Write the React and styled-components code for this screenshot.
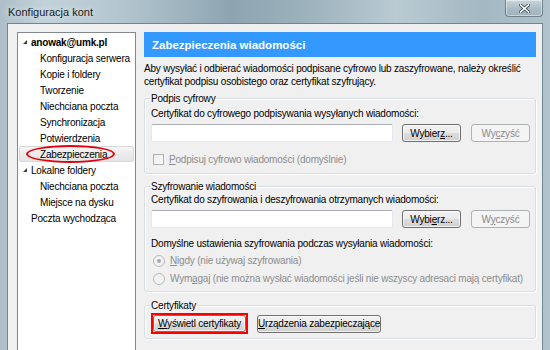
import React from "react";
import styled, { createGlobalStyle } from "styled-components";

const GlobalStyle = createGlobalStyle`
  html, body {
    margin: 0;
    padding: 0;
  }
  body {
    width: 550px;
    height: 350px;
    overflow: hidden;
    font-family: "Liberation Sans", Arial, sans-serif;
    font-size: 10px;
    letter-spacing: -0.2px;
    color: #000;
  }
`;

const Window = styled.div`
  width: 550px;
  height: 350px;
  overflow: hidden;
  display: flex;
  flex-direction: column;
  background: linear-gradient(
    90deg,
    #aebfc9 0%,
    #c2d2da 8%,
    #b3c6d0 22%,
    #8ea5b1 42%,
    #9bb1bc 55%,
    #b9cad2 72%,
    #a3b8c3 88%,
    #b1c3cc 100%
  );
`;

const TitleBar = styled.div`
  height: 23px;
  flex: none;
  display: flex;
  align-items: flex-start;
  justify-content: space-between;
  padding: 0 7px 0 8px;
`;

const Title = styled.span`
  margin-top: 6px;
  font-size: 11px;
  letter-spacing: 0;
  color: #1a1a1a;
  text-shadow: 0 0 6px rgba(255, 255, 255, 0.9);
`;

const CloseButton = styled.div`
  width: 36px;
  height: 16px;
  display: flex;
  align-items: center;
  justify-content: center;
  border: 1px solid #6e8290;
  border-top: none;
  border-radius: 0 0 4px 4px;
  background: linear-gradient(#c9d6dd, #a9bbc4 55%, #9fb2bc);
  box-shadow: inset 0 0 0 1px rgba(255, 255, 255, 0.45);
`;

const Body = styled.div`
  flex: 1;
  margin: 0 7px -20px 7px;
  border: 1px solid #6f8592;
  background: #f0f0f0;
  display: flex;
  gap: 8px;
  padding: 8px 10px 0 9px;
`;

const Tree = styled.div`
  width: 117px;
  flex: none;
  border: 1px solid #828790;
  background: #fff;
  padding-top: 1px;
`;

const TreeRow = styled.div`
  position: relative;
  height: 16px;
  display: flex;
  align-items: center;
  padding-left: ${(p) => p.$indent}px;
  margin: 0 1px;
  font-weight: ${(p) => (p.$bold ? "bold" : "normal")};
  white-space: nowrap;
  border: 1px solid ${(p) => (p.$selected ? "#d9d9d9" : "transparent")};
  border-radius: 2px;
  background: ${(p) =>
    p.$selected ? "linear-gradient(#f4f4f4, #e4e4e4)" : "transparent"};
  box-sizing: border-box;
`;

const Expander = styled.span`
  width: 0;
  height: 0;
  margin-right: 4px;
  border-left: 4px solid transparent;
  border-bottom: 4px solid #404040;
`;

const RedEllipse = styled.span`
  position: absolute;
  left: 6px;
  top: -2px;
  width: 85px;
  height: 14px;
  border: 2px solid #e3000e;
  border-radius: 50%;
`;

const Panel = styled.div`
  flex: 1;
  display: flex;
  flex-direction: column;
`;

const Header = styled.div`
  height: 25px;
  flex: none;
  display: flex;
  align-items: center;
  padding-left: 8px;
  background: #3399ff;
  color: #fff;
  font-weight: bold;
  font-size: 11.5px;
  letter-spacing: 0;
`;

const Description = styled.p`
  margin: 5px 0 0;
  line-height: 13px;
  white-space: nowrap;
`;

const Group = styled.fieldset`
  margin: ${(p) => p.$gap}px 0 0;
  padding: 0 5px ${(p) => p.$bottom}px 6px;
  border: 1px solid #d5dfe5;
  border-radius: 3px;
  box-shadow: inset 1px 1px 0 #fff, 1px 1px 0 #fff;
`;

const Legend = styled.legend`
  padding: 0 1px;
  margin-left: -1px;
  line-height: 13px;
`;

const Line = styled.div`
  line-height: 13px;
  margin-top: ${(p) => p.$top || 0}px;
  white-space: nowrap;
`;

const FieldRow = styled.div`
  display: flex;
  align-items: center;
  margin-top: ${(p) => p.$top}px;
`;

const TextInput = styled.div`
  width: 240px;
  height: 16px;
  background: #fff;
  border: 1px solid #e3e9ef;
  border-top-color: #abadb3;
  border-radius: 2px;
`;

const Button = styled.button`
  width: ${(p) => p.$w}px;
  height: ${(p) => p.$h || 18}px;
  margin-left: ${(p) => p.$left || 0}px;
  padding: 0;
  font-family: inherit;
  font-size: 10px;
  letter-spacing: -0.2px;
  white-space: nowrap;
  color: #000;
  border: 1px solid #707070;
  border-radius: 3px;
  background: linear-gradient(#f2f2f2 0%, #ebebeb 48%, #dddddd 52%, #cfcfcf 100%);
  box-shadow: inset 0 0 0 1px rgba(255, 255, 255, 0.7);

  &:disabled {
    color: #8a8a8a;
    border-color: #adb2b5;
    background: #f4f4f4;
    box-shadow: none;
  }
`;

const Highlight = styled.div`
  border: 2px solid #ff0000;
  display: flex;
`;

const OptionRow = styled.label`
  display: flex;
  align-items: center;
  gap: 5px;
  height: 13px;
  margin-top: ${(p) => p.$top}px;
  margin-left: ${(p) => p.$left || 0}px;
  color: #8d8d8d;
  white-space: nowrap;
`;

const CheckBox = styled.span`
  width: 9px;
  height: 9px;
  border: 1px solid #b1b1b1;
  background: linear-gradient(135deg, #ececec, #fbfbfb);
`;

const Radio = styled.span`
  width: 10px;
  height: 10px;
  border-radius: 50%;
  border: 1px solid #b9b9b9;
  background: #f2f2f2;
  display: flex;
  align-items: center;
  justify-content: center;

  &::after {
    content: "";
    width: 4px;
    height: 4px;
    border-radius: 50%;
    background: ${(p) => (p.$checked ? "#a9a9a9" : "transparent")};
  }
`;

const treeItems = [
  { label: "anowak@umk.pl", indent: 3, expander: true, bold: true },
  { label: "Konfiguracja serwera", indent: 20 },
  { label: "Kopie i foldery", indent: 20 },
  { label: "Tworzenie", indent: 20 },
  { label: "Niechciana poczta", indent: 20 },
  { label: "Synchronizacja", indent: 20 },
  { label: "Potwierdzenia", indent: 20 },
  { label: "Zabezpieczenia", indent: 20, selected: true },
  { label: "Lokalne foldery", indent: 3, expander: true },
  { label: "Niechciana poczta", indent: 20 },
  { label: "Miejsce na dysku", indent: 20 },
  { label: "Poczta wychodząca", indent: 11 },
];

const App = () => {
  return (
    <Window>
      <GlobalStyle />
      <TitleBar>
        <Title>Konfiguracja kont</Title>
        <CloseButton>
          <svg width="11" height="9" viewBox="0 0 11 9">
            <path
              d="M1.5 1 L9.5 8 M9.5 1 L1.5 8"
              stroke="#3a4a55"
              strokeWidth="3.2"
              strokeLinecap="square"
            />
            <path
              d="M1.5 1 L9.5 8 M9.5 1 L1.5 8"
              stroke="#fff"
              strokeWidth="1.6"
              strokeLinecap="square"
            />
          </svg>
        </CloseButton>
      </TitleBar>

      <Body>
        <Tree>
          {treeItems.map((item, i) => (
            <TreeRow
              key={i}
              $indent={item.indent}
              $bold={item.bold}
              $selected={item.selected}
            >
              {item.expander && <Expander />}
              {item.label}
              {item.selected && <RedEllipse />}
            </TreeRow>
          ))}
        </Tree>

        <Panel>
          <Header>Zabezpieczenia wiadomości</Header>
          <Description>
            Aby wysyłać i odbierać wiadomości podpisane cyfrowo lub
            zaszyfrowane, należy określić
            <br />
            certyfikat podpisu osobistego oraz certyfikat szyfrujący.
          </Description>

          <Group $gap={4} $bottom={7}>
            <Legend>Podpis cyfrowy</Legend>
            <Line $top={2}>
              Certyfikat do cyfrowego podpisywania wysyłanych wiadomości:
            </Line>
            <FieldRow $top={4}>
              <TextInput />
              <Button $w={59} $left={9}>
                Wybier<u>z</u>...
              </Button>
              <Button $w={59} $left={10} disabled>
                Wy<u>c</u>zyść
              </Button>
            </FieldRow>
            <OptionRow $top={11} $left={2}>
              <CheckBox />
              <span>
                <u>P</u>odpisuj cyfrowo wiadomości (domyślnie)
              </span>
            </OptionRow>
          </Group>

          <Group $gap={6} $bottom={6}>
            <Legend>Szyfrowanie wiadomości</Legend>
            <Line>
              Certyfikat do szyfrowania i deszyfrowania otrzymanych wiadomości:
            </Line>
            <FieldRow $top={4}>
              <TextInput />
              <Button $w={59} $left={9}>
                Wybi<u>e</u>rz...
              </Button>
              <Button $w={59} $left={10} disabled>
                W<u>y</u>czyść
              </Button>
            </FieldRow>
            <Line $top={9}>
              Domyślne ustawienia szyfrowania podczas wysyłania wiadomości:
            </Line>
            <OptionRow $top={4} $left={2}>
              <Radio $checked />
              <span>
                <u>N</u>igdy (nie używaj szyfrowania)
              </span>
            </OptionRow>
            <OptionRow $top={5} $left={2}>
              <Radio />
              <span>
                Wym<u>a</u>gaj (nie można wysłać wiadomości jeśli nie wszyscy
                adresaci mają certyfikat)
              </span>
            </OptionRow>
          </Group>

          <Group $gap={7} $bottom={4}>
            <Legend>Certyfikaty</Legend>
            <FieldRow $top={1}>
              <Highlight>
                <Button $w={93} $h={17}>
                  <u>W</u>yświetl certyfikaty
                </Button>
              </Highlight>
              <Button $w={124} $h={18} $left={9}>
                <u>U</u>rządzenia zabezpieczające
              </Button>
            </FieldRow>
          </Group>
        </Panel>
      </Body>
    </Window>
  );
};

export default App;
